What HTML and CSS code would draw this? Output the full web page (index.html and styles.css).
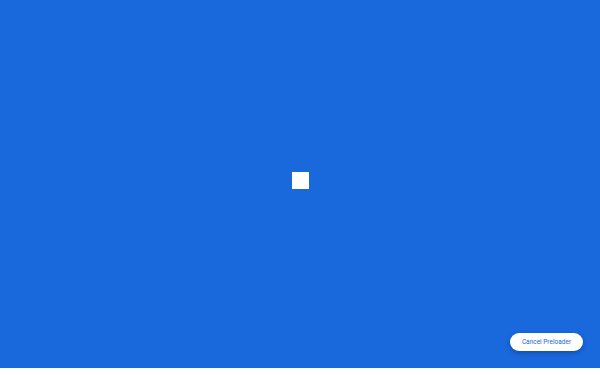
FILE: index.html
```html
<!DOCTYPE html>
<html>
<head>
<meta charset="utf-8">
<link rel="stylesheet" href="styles.css">
</head>
<body>
<div class="preloader">
  <div class="square"></div>
  <button class="cancel">Cancel Preloader</button>
</div>
<div class="rest"></div>
</body>
</html>
```

FILE: styles.css
```css
html, body {
  margin: 0;
  padding: 0;
  background: #ffffff;
}
body {
  min-height: 375px;
}
.preloader {
  position: relative;
  height: 368px;
  background: #1968dc;
  display: flex;
  align-items: center;
  justify-content: center;
  padding-bottom: 7px;
  box-sizing: border-box;
}
.rest {
  height: 7px;
  background: #ffffff;
}
.square {
  width: 15px;
  height: 15px;
  background: #ffffff;
  border: 1px solid rgba(255,255,255,0.6);
}
.cancel {
  position: absolute;
  right: 17px;
  bottom: 17px;
  width: 73px;
  height: 18px;
  padding: 0;
  border: none;
  border-radius: 9px;
  background: #ffffff;
  color: #1968dc;
  font-family: Roboto, "Liberation Sans", sans-serif;
  font-size: 6.5px;
  font-weight: 400;
  box-shadow: 0 2px 5px rgba(0,0,0,0.25);
}
```
